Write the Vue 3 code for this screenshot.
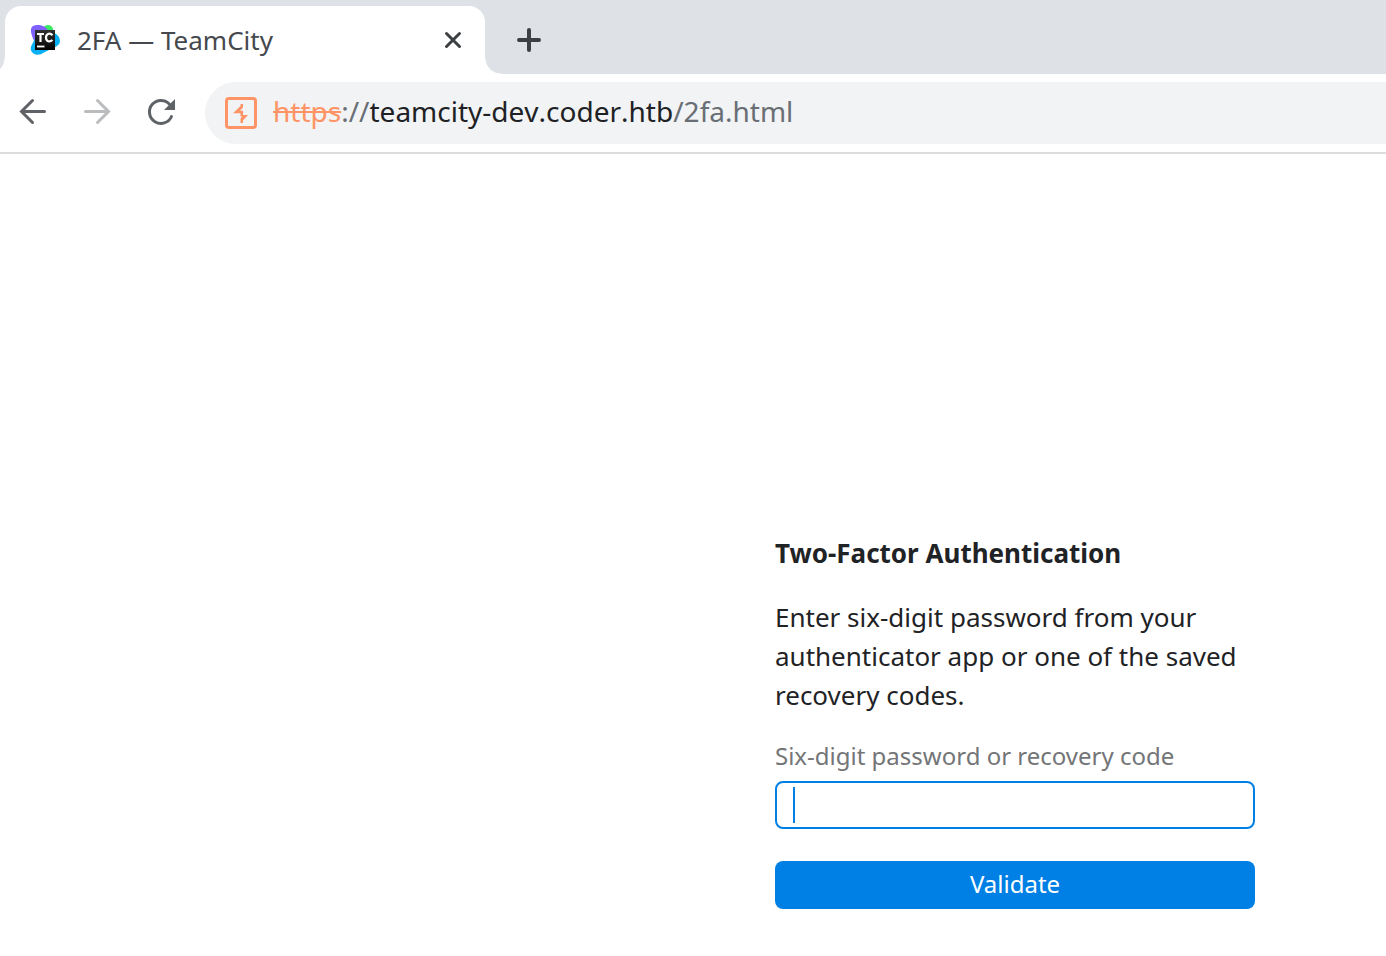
<script setup>
import { ref } from 'vue'

const code = ref('')
</script>

<template>
  <div class="browser">
    <header class="tab-strip">
      <div class="tab">
        <svg class="favicon" viewBox="0 0 32 32" aria-hidden="true">
          <defs>
            <linearGradient id="tile" x1="0" y1="0" x2="0" y2="1">
              <stop offset="0" stop-color="#303030" />
              <stop offset="0.6" stop-color="#181818" />
              <stop offset="1" stop-color="#000" />
            </linearGradient>
          </defs>
          <path d="M14 4C16 0 23 0 24 5L25 11H14Z" fill="#3bea62" />
          <path d="M2 8C1 2 5 1 9 1C14 1 17 3 20 8L8 22Q3 14 2 8Z" fill="#8060ff" />
          <path d="M6 14.500L24 8.500Q31 11 31 17Q31 21 25 23.500L15 28.500C10 32 5 31 3 28Q1 26 2 22.500Z" fill="#07b0f4" />
          <rect x="6" y="6" width="20" height="20" fill="url(#tile)" />
          <path d="M8 10H15M11.500 10V18" fill="none" stroke="#fff" stroke-width="2.200" />
          <path d="M23.500 11.200C20.500 8.200 17 10 17 13.500C17 17.500 20.500 18.500 23.500 16" fill="none" stroke="#fff" stroke-width="2.200" />
          <path d="M8 22.500H15.500" stroke="#fff" stroke-width="1.800" />
        </svg>
        <span class="tab-title">2FA — TeamCity</span>
        <button class="icon-button close" type="button" aria-label="Close tab">
          <svg viewBox="0 0 32 32"><path d="M9.500 9.500L22.500 22.500M22.500 9.500L9.500 22.500" /></svg>
        </button>
      </div>
      <button class="icon-button new-tab" type="button" aria-label="New tab">
        <svg viewBox="0 0 32 32"><path d="M16 6V26M6 16H26" /></svg>
      </button>
    </header>

    <nav class="toolbar" aria-label="Navigation">
      <button class="icon-button" type="button" aria-label="Back">
        <svg viewBox="0 0 32 32"><path d="M27.500 14.500H5M15.500 3.500L4.500 14.500L15.500 25.500" /></svg>
      </button>
      <button class="icon-button forward" type="button" aria-label="Forward" disabled>
        <svg viewBox="0 0 32 32"><path d="M4.500 14.500H27M16.500 3.500L27.500 14.500L16.500 25.500" /></svg>
      </button>
      <button class="icon-button" type="button" aria-label="Reload">
        <svg viewBox="0 0 32 32">
          <path d="M26.500 19.500A11.500 11.500 0 1 1 24.500 7.200" />
          <path class="solid" d="M30 2V13H19Z" />
        </svg>
      </button>
      <div class="address">
        <svg class="site-icon" viewBox="0 0 32 32" aria-hidden="true">
          <rect x="1.500" y="1.500" width="29" height="29" rx="2.500" fill="none" stroke="#ff9466" stroke-width="3" />
          <path d="M15.500 7H18V10.500L15 13.800H18V18H23L18 23.500V26H15.500V21.500L17 19.500H15.500V16.300H8L15.500 9Z" fill="#ff9466" />
        </svg>
        <div class="url" role="textbox" aria-label="Address" tabindex="0"><s>https</s>://<span class="host">teamcity-dev.coder.htb</span>/2fa.html</div>
      </div>
    </nav>

    <main class="page">
      <form class="card" @submit.prevent>
        <h1>Two-Factor Authentication</h1>
        <p>Enter six-digit password from your authenticator app or one of the saved recovery codes.</p>
        <label for="code">Six-digit password or recovery code</label>
        <div class="field">
          <input id="code" v-model="code" type="text" autocomplete="one-time-code" />
          <span v-if="!code" class="caret"></span>
        </div>
        <button class="submit" type="submit">Validate</button>
      </form>
    </main>
  </div>
</template>

<style>
body {
  margin: 0;
  background: #fff;
}
</style>

<style scoped>
.browser {
  min-height: 100vh;
  overflow: hidden;
  background: #fff;
  color: #1f2326;
  font-family: "Noto Sans", sans-serif;
}

.tab-strip {
  display: flex;
  height: 74px;
  box-sizing: border-box;
  padding: 6px 0 0 5px;
  background: #dee1e6;
}

.tab {
  position: relative;
  display: flex;
  align-items: center;
  width: 480px;
  box-sizing: border-box;
  padding: 0 16px 0 24px;
  border-radius: 16px 16px 0 0;
  background: #fff;
}

.tab::before,
.tab::after {
  content: "";
  position: absolute;
  bottom: 0;
  width: 16px;
  height: 16px;
}

.tab::before {
  right: 100%;
  background: radial-gradient(circle at 0 0, transparent 15px, #fff 16px);
}

.tab::after {
  left: 100%;
  background: radial-gradient(circle at 100% 0, transparent 15px, #fff 16px);
}

.favicon {
  width: 32px;
  height: 32px;
  margin-right: 16px;
}

.tab-title {
  flex: 1;
  color: #45494d;
  font-size: 26px;
  line-height: 36px;
}

.icon-button {
  flex: none;
  width: 32px;
  height: 32px;
  padding: 0;
  border: 0;
  background: none;
  color: #5f6368;
}

.icon-button svg {
  display: block;
  width: 32px;
  height: 32px;
  fill: none;
  stroke: currentColor;
  stroke-width: 3;
  stroke-linecap: round;
}

.icon-button .solid {
  fill: currentColor;
  stroke: none;
}

.close,
.new-tab {
  color: #3c4043;
}

.new-tab {
  align-self: center;
  margin-left: 28px;
}

.new-tab svg {
  stroke-width: 4;
}

.forward {
  color: #babcbe;
}

.toolbar {
  display: flex;
  align-items: center;
  gap: 32px;
  padding: 8px 0 8px 17px;
  border-bottom: 2px solid #dadcde;
}

.address {
  display: flex;
  flex: 1;
  align-items: center;
  gap: 16px;
  height: 62px;
  margin-left: -4px;
  padding-left: 20px;
  border-radius: 31px 0 0 31px;
  background: #f1f3f4;
}

.site-icon {
  width: 32px;
  height: 32px;
}

.url {
  padding-bottom: 4px;
  color: #696e74;
  font-size: 28px;
  font-kerning: none;
  line-height: 40px;
  white-space: nowrap;
}

.url s {
  color: #ff9466;
}

.host {
  color: #202124;
}

.page {
  display: flex;
  justify-content: flex-end;
  padding: 380px 131px 40px 24px;
}

.card {
  width: 480px;
}

h1,
p {
  margin: 0;
  font-size: 26px;
  line-height: 39px;
}

h1 {
  margin-bottom: 25px;
  font-weight: 700;
}

p {
  margin-bottom: 24px;
}

label {
  display: block;
  margin-bottom: 8px;
  color: #737577;
  font-size: 24px;
  line-height: 34px;
}

.field {
  position: relative;
  margin-bottom: 32px;
}

input {
  display: block;
  width: 100%;
  height: 48px;
  box-sizing: border-box;
  padding: 0 16px;
  border: 2px solid #0080e5;
  border-radius: 8px;
  outline: none;
  background: #fff;
  color: inherit;
  font: inherit;
  font-size: 26px;
}

.caret {
  position: absolute;
  top: 6px;
  left: 18px;
  width: 2px;
  height: 36px;
  background: #0080e5;
}

.submit {
  display: block;
  width: 100%;
  height: 48px;
  padding: 0 0 4px;
  border: 0;
  border-radius: 8px;
  background: #0080e5;
  color: #fff;
  font: inherit;
  font-size: 24px;
}
</style>
